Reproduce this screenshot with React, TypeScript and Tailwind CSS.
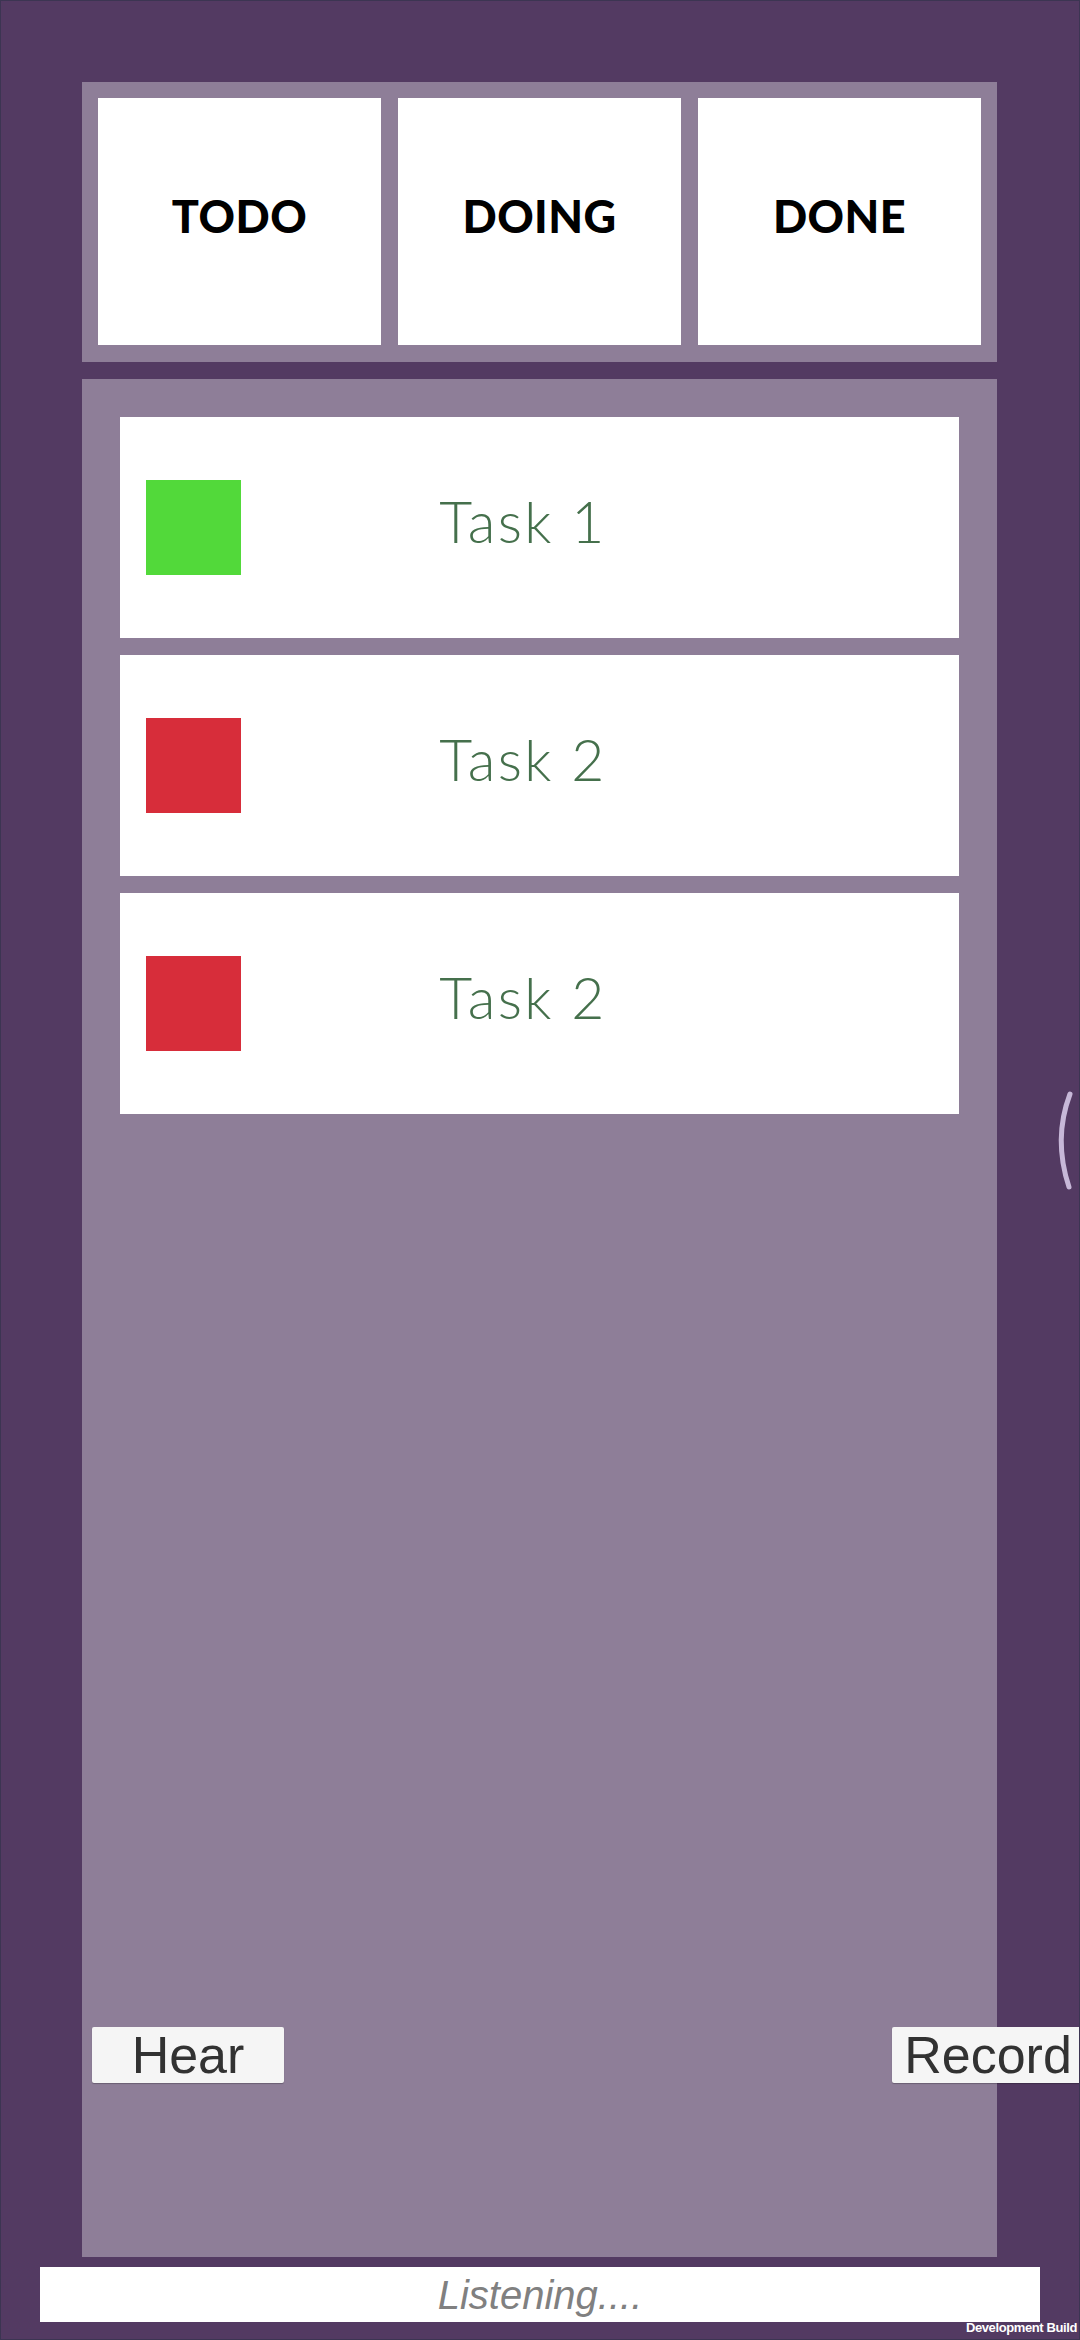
const columns = ["TODO", "DOING", "DONE"];

const tasks = [
  { id: 1, title: "Task 1", color: "bg-[#52d93a]" },
  { id: 2, title: "Task 2", color: "bg-[#d72d3a]" },
  { id: 3, title: "Task 2", color: "bg-[#d72d3a]" },
];

function TaskCard({ title, color }: { title: string; color: string }) {
  return (
    <div className="flex h-[221px] items-center bg-white pl-[26px] pr-[26px]">
      <div className={`h-[95px] w-[95px] shrink-0 ${color}`} />
      <span className="mb-[12px] flex-1 pr-[128px] text-center font-['Lato',sans-serif] text-[57px] font-light leading-none tracking-[0.04em] text-[#45704c]">
        {title}
      </span>
    </div>
  );
}

export default function App() {
  return (
    <div className="relative flex h-[2340px] w-[1080px] flex-col overflow-hidden border border-[#3c3552] bg-[#533a62] pt-[81px]">
      {/* column headers */}
      <div className="ml-[81px] grid h-[280px] w-[915px] grid-cols-3 gap-[17px] bg-[#8e7e98] p-[16px] pb-[17px]">
        {columns.map((c) => (
          <div key={c} className="flex items-center justify-center bg-white pb-[10px]">
            <span className="font-['Lato',sans-serif] text-[45px] font-black leading-none tracking-[0.01em] text-black">
              {c}
            </span>
          </div>
        ))}
      </div>

      {/* task list */}
      <div className="ml-[81px] mt-[17px] flex h-[1878px] w-[915px] flex-col gap-[17px] bg-[#8e7e98] px-[38px] pt-[38px]">
        {tasks.map((t) => (
          <TaskCard key={t.id} title={t.title} color={t.color} />
        ))}
      </div>

      <div className="ml-[39px] mt-[10px] flex h-[55px] w-[1000px] items-center justify-center bg-white">
        <span className="font-['Liberation_Sans',sans-serif] text-[40px] italic leading-none text-[#808080]">
          Listening....
        </span>
      </div>

      <button className="absolute left-[91px] top-[2026px] flex h-[56px] w-[192px] items-center justify-center rounded-[2px] bg-[#f5f5f5] font-['Liberation_Sans',sans-serif] text-[52px] leading-none text-[#323232] shadow-[0_1px_1px_rgba(0,0,0,0.25)]">
        Hear
      </button>
      <button className="absolute left-[891px] top-[2026px] flex h-[56px] w-[192px] items-center justify-center rounded-[2px] bg-[#f5f5f5] font-['Liberation_Sans',sans-serif] text-[52px] leading-none text-[#323232] shadow-[0_1px_1px_rgba(0,0,0,0.25)]">
        Record
      </button>

      <svg className="absolute left-[1040px] top-[1080px]" width="40" height="120" viewBox="0 0 40 120">
        <path d="M29 13 Q12 58 28 106" fill="none" stroke="#c7b8d8" strokeWidth="5" strokeLinecap="round" />
      </svg>

      <span className="absolute bottom-[5px] right-[2px] font-['Liberation_Sans',sans-serif] text-[13px] font-bold leading-none tracking-[-0.03em] text-white">
        Development Build
      </span>
    </div>
  );
}
